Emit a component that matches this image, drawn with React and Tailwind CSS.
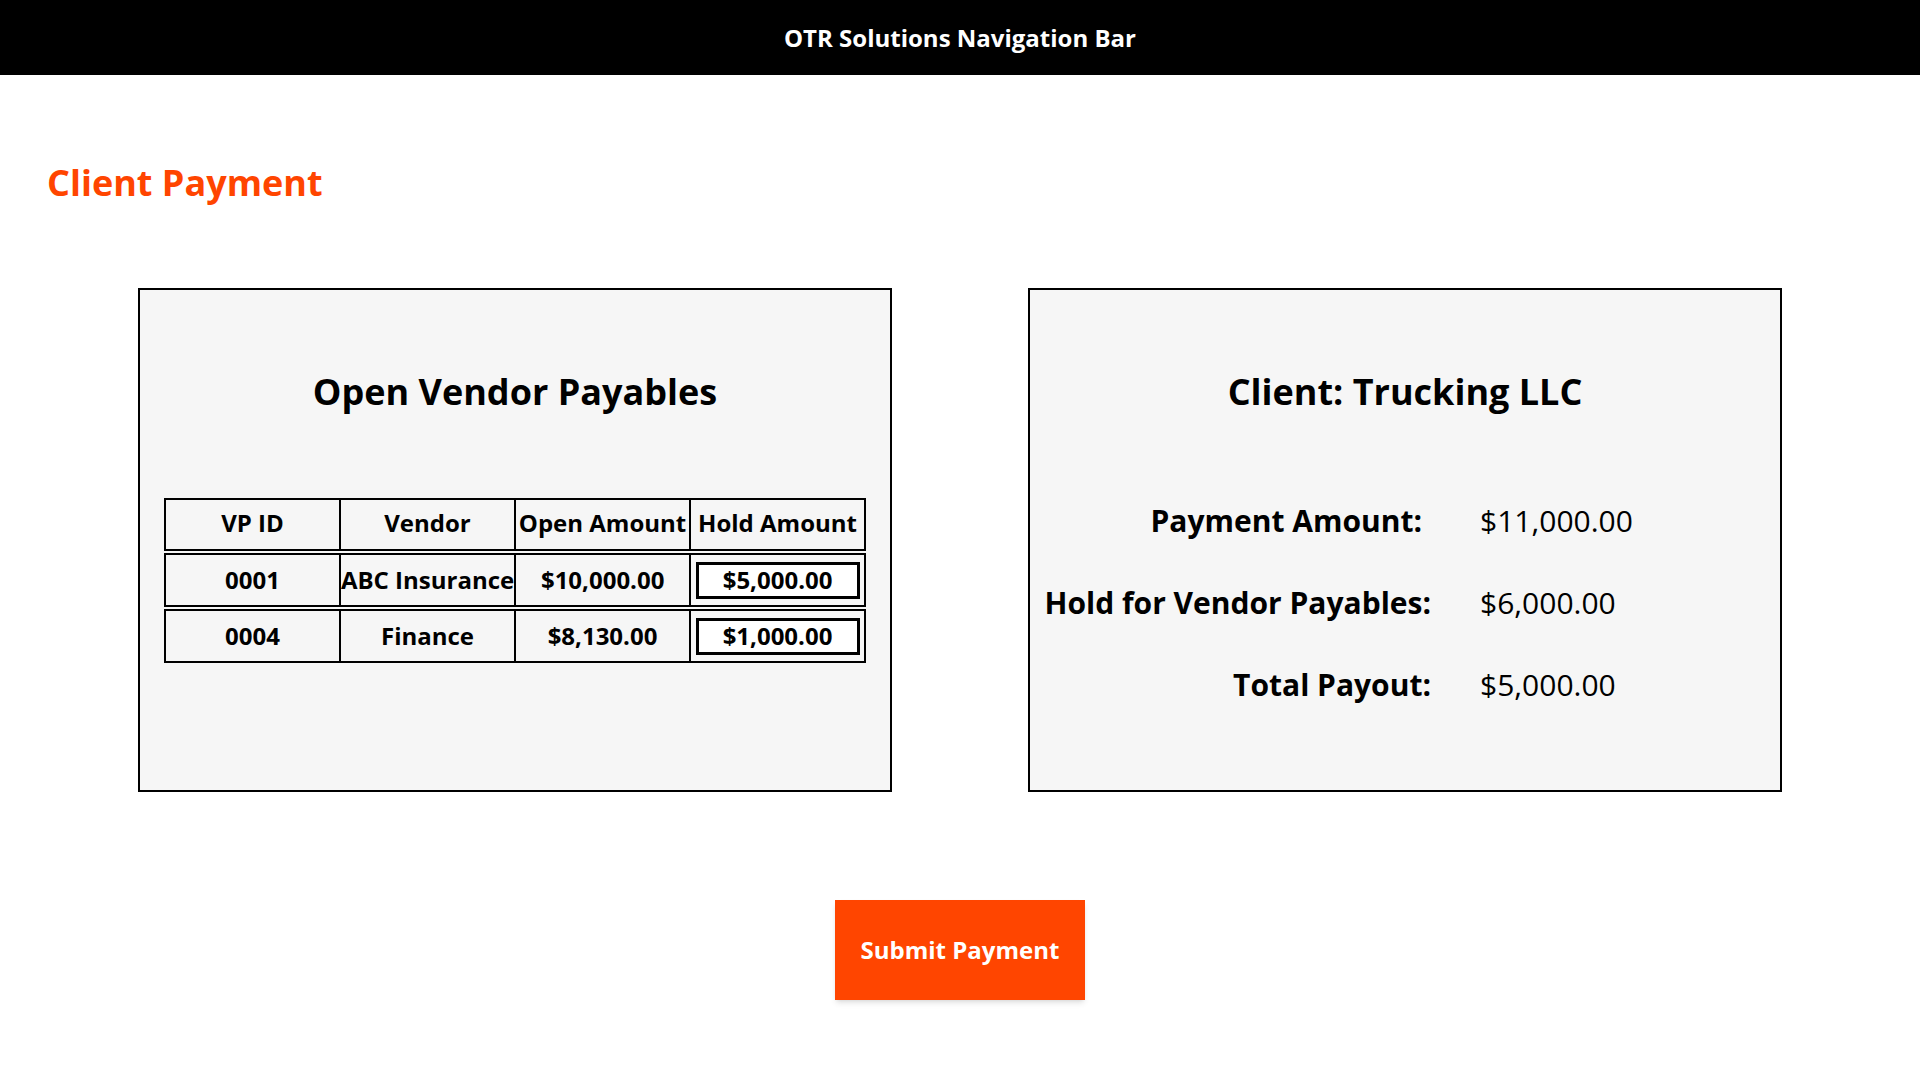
import React from 'react';

const payables = [
  { id: '0001', vendor: 'ABC Insurance', open: '$10,000.00', hold: '$5,000.00' },
  { id: '0004', vendor: 'Finance', open: '$8,130.00', hold: '$1,000.00' },
];

function Cell({ children, first, head }) {
  return (
    <div className={`flex-1 flex items-center justify-center whitespace-nowrap ${head ? 'pb-[3px]' : ''} ${first ? '' : 'border-l-2 border-black'}`}>
      {children}
    </div>
  );
}

export default function App() {
  return (
    <div className="min-h-screen bg-white text-black" style={{ fontFamily: '"Open Sans", "Noto Sans", sans-serif' }}>
      {/* Nav */}
      <div className="h-[75px] bg-black flex items-center justify-center">
        <span className="text-white text-[24px] font-bold">OTR Solutions Navigation Bar</span>
      </div>

      <div className="px-[47px] pt-[81px]">
        <h1 className="text-[36px] leading-[54px] font-bold text-[#ff4500]">Client Payment</h1>
      </div>

      {/* Panels */}
      <div className="mt-[78px] flex justify-center gap-[136px]">
        {/* Open Vendor Payables */}
        <div className="w-[754px] h-[504px] border-2 border-black bg-[#f6f6f6] pt-[75px]">
          <h2 className="text-center text-[36px] leading-[54px] font-bold">Open Vendor Payables</h2>
          <div className="mt-[79px] w-[702px] mx-auto flex flex-col gap-[2px] text-[24px] font-bold">
            <div className="h-[53px] flex border-2 border-black">
              <Cell first head>VP ID</Cell>
              <Cell head>Vendor</Cell>
              <Cell head>Open Amount</Cell>
              <Cell head>Hold Amount</Cell>
            </div>
            {payables.map((p) => (
              <div key={p.id} className="h-[54px] flex border-2 border-black">
                <Cell first>{p.id}</Cell>
                <Cell>{p.vendor}</Cell>
                <Cell>{p.open}</Cell>
                <Cell>
                  <div className="w-[164px] h-[37px] border-[3px] border-black bg-white flex items-center justify-center">
                    {p.hold}
                  </div>
                </Cell>
              </div>
            ))}
          </div>
        </div>

        {/* Client summary */}
        <div className="w-[754px] h-[504px] border-2 border-black bg-[#f6f6f6] pt-[75px]">
          <h2 className="text-center text-[36px] leading-[54px] font-bold">Client: Trucking LLC</h2>
          <div className="mt-[60px] grid grid-cols-[401px_1fr] gap-x-[49px] auto-rows-[82px] items-center text-[30px]">
            <div className="text-right font-bold pr-[9px]">Payment Amount:</div>
            <div className="font-medium">$11,000.00</div>
            <div className="text-right font-bold">Hold for Vendor Payables:</div>
            <div className="font-medium">$6,000.00</div>
            <div className="text-right font-bold">Total Payout:</div>
            <div className="font-medium">$5,000.00</div>
          </div>
        </div>
      </div>

      {/* Submit */}
      <div className="mt-[108px] flex justify-center">
        <button className="w-[250px] h-[100px] bg-[#ff4500] text-white text-[24px] font-bold shadow-md">
          Submit Payment
        </button>
      </div>
    </div>
  );
}
